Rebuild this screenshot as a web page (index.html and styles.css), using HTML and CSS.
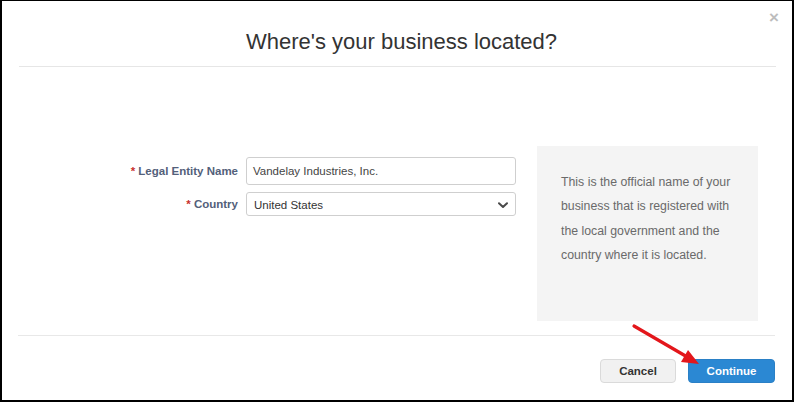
FILE: index.html
```html
<!DOCTYPE html>
<html lang="en">
<head>
<meta charset="utf-8">
<title>Where's your business located?</title>
<link rel="stylesheet" href="styles.css">
</head>
<body>
<div class="modal">
  <header class="modal-header">
    <h1 class="modal-title">Where's your business located?</h1>
    <span class="close" aria-label="Close">&times;</span>
  </header>
  <main class="modal-body">
    <div class="form">
      <div class="form-row">
        <label class="label"><span class="req">*</span> Legal Entity Name</label>
        <div class="input">Vandelay Industries, Inc.</div>
      </div>
      <div class="form-row">
        <label class="label"><span class="req">*</span> Country</label>
        <div class="select">
          <span>United States</span>
          <svg class="chevron" width="10" height="7" viewBox="0 0 10 7"><path d="M1 1.2 L5 5 L9 1.2" fill="none" stroke="#4a4a4a" stroke-width="2" stroke-linecap="round" stroke-linejoin="round"/></svg>
        </div>
      </div>
    </div>
    <aside class="help">
      This is the official name of your business that is registered with the local government and the country where it is located.
    </aside>
  </main>
  <footer class="modal-footer">
    <button class="btn btn-cancel">Cancel</button>
    <button class="btn btn-primary">Continue</button>
  </footer>
  <svg class="annot-arrow" width="80" height="50" viewBox="0 0 80 50">
    <line x1="3" y1="3" x2="58" y2="35" stroke="#e3161b" stroke-width="3.2" stroke-linecap="round"/>
    <polygon points="68,41 50,39 57,27" fill="#e3161b"/>
  </svg>
</div>
</body>
</html>
```

FILE: styles.css
```css
* { box-sizing: border-box; }
html, body { margin: 0; padding: 0; background: #fff; }
body {
  font-family: "Liberation Sans", Arial, sans-serif;
  color: #333;
}
.modal {
  position: relative;
  width: 794px;
  height: 402px;
  border: 2px solid #000;
  border-top-width: 1px;
  display: flex;
  flex-direction: column;
  background: #fff;
}
.modal-header {
  height: 66px;
  margin: 0 16px 0 17px;
  padding: 28px 0 11px 8px;
  border-bottom: 1px solid #e6e6e6;
  text-align: center;
}
.modal-title {
  margin: 0;
  font-size: 22px;
  line-height: 26px;
  font-weight: normal;
  color: #333;
}
.close {
  position: absolute;
  top: 7px;
  right: 13px;
  font-size: 17px;
  line-height: 20px;
  font-weight: bold;
  color: #bdbdbd;
}
.modal-body {
  flex: 1;
  display: flex;
  gap: 21px;
  padding: 79px 34px 14px 120px;
}
.form {
  display: flex;
  flex-direction: column;
  gap: 7px;
  margin-top: 11px;
}
.form-row {
  display: flex;
  align-items: center;
  gap: 8px;
}
.label {
  width: 116px;
  text-align: right;
  font-size: 11.5px;
  font-weight: bold;
  color: #53607a;
}
.req { color: #c8302c; }
.input, .select {
  width: 270px;
  border: 1px solid #cfcfcf;
  border-radius: 3px;
  font-size: 11.5px;
  color: #333;
  background: #fff;
  display: flex;
  align-items: center;
}
.input {
  height: 28px;
  padding: 0 6px;
  color: #444;
}
.select {
  height: 24px;
  padding: 1px 7px 0 7px;
  justify-content: space-between;
}
.chevron { margin-top: 1px; }
.help {
  width: 221px;
  height: 175px;
  background: #f4f4f4;
  padding: 24px 24px;
  font-size: 12.3px;
  line-height: 24.4px;
  color: #6a6a6a;
}
.modal-footer {
  height: 65px;
  margin: 0 17px 0 16px;
  border-top: 1px solid #e8e8e8;
  padding: 23px 0 17px;
  display: flex;
  justify-content: flex-end;
  gap: 12px;
}
.btn {
  height: 24px;
  border-radius: 4px;
  font-family: "Liberation Sans", Arial, sans-serif;
  font-size: 11.5px;
  font-weight: bold;
  padding: 0;
  cursor: pointer;
}
.btn-cancel {
  width: 76px;
  background: #f1f1f1;
  border: 1px solid #dadada;
  color: #333;
}
.btn-primary {
  width: 87px;
  background: #2b88d3;
  border: 1px solid #2a80c6;
  color: #fff;
}
.annot-arrow {
  position: absolute;
  left: 629px;
  top: 322px;
}
```
